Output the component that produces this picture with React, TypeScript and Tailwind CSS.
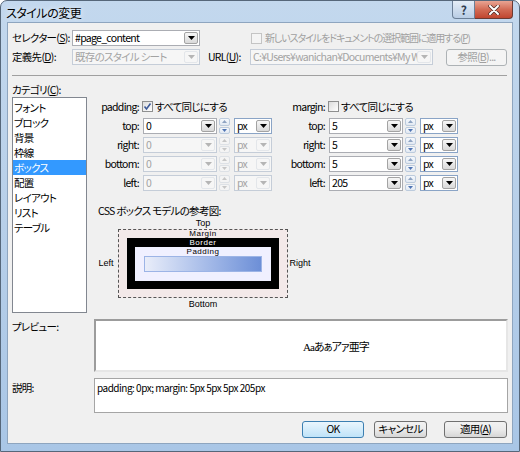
import React from 'react'

const ui = "font-['Noto_Sans_CJK_JP',sans-serif] [font-feature-settings:'palt']"

const Arrow: React.FC<{ off?: boolean }> = ({ off }) => (
  <svg width="7" height="4" viewBox="0 0 7 4">
    <path d="M0 0h7L3.5 4z" fill={off ? '#b5b5b5' : '#000'} />
  </svg>
)

const DropBtn: React.FC<{ off?: boolean }> = ({ off }) => (
  <div
    className={`w-[14px] h-[12px] mr-px shrink-0 flex items-center justify-center rounded-[2px] border ${
      off ? 'border-[#e3e6ea] bg-[#f6f6f6]' : 'border-[#a3a3a3] bg-gradient-to-b from-[#f7f7f7] to-[#d9d9d9]'
    }`}
  >
    <Arrow off={off} />
  </div>
)

const Combo: React.FC<{ w: string; value: string; off?: boolean; blue?: boolean }> = ({ w, value, off, blue }) => (
  <div
    className={`${w} h-[16px] shrink-0 flex items-center border ${
      off ? 'border-[#c5cdd8] bg-[#f6f6f6] text-[#a3a3a3]' : blue ? 'border-[#8aa4c6] bg-white' : 'border-[#abadb3] bg-white'
    }`}
  >
    <span className="flex-1 pl-[2px] overflow-hidden whitespace-nowrap leading-[14px]">{value}</span>
    <DropBtn off={off} />
  </div>
)

const Spin: React.FC<{ off?: boolean }> = ({ off }) => {
  const box = off ? 'border-[#dde1e6] bg-[#f4f4f4]' : 'border-[#bccbdd] bg-gradient-to-b from-[#f5f8fc] to-[#e2e9f2]'
  return (
    <div className="w-[11px] h-[16px] flex flex-col gap-px">
      <div className={`flex-1 flex items-center justify-center rounded-[2px] border ${box}`}>
        <svg width="5" height="3" viewBox="0 0 5 3">
          <path d="M0 3h5L2.5 0z" fill={off ? '#c6c6c6' : '#8ea3c2'} />
        </svg>
      </div>
      <div className={`flex-1 flex items-center justify-center rounded-[2px] border ${box}`}>
        <svg width="5" height="3" viewBox="0 0 5 3">
          <path d="M0 0h5L2.5 3z" fill={off ? '#c6c6c6' : '#4f74b3'} />
        </svg>
      </div>
    </div>
  )
}

const Check: React.FC<{ on?: boolean; off?: boolean }> = ({ on, off }) => (
  <div
    className={`w-[11px] h-[11px] shrink-0 border flex items-center justify-center ${
      off ? 'border-[#c4c4c4] bg-[#f4f4f4]' : 'border-[#8e8f8f] bg-gradient-to-br from-[#dcdcdc] to-white'
    }`}
  >
    {on && (
      <svg width="9" height="9" viewBox="0 0 9 9">
        <path d="M1.5 4.5l2 2.5 4-5.5" fill="none" stroke="#3d5a99" strokeWidth="1.6" />
      </svg>
    )}
  </div>
)

const Btn: React.FC<{ w: string; def?: boolean; off?: boolean; children: React.ReactNode }> = ({ w, def, off, children }) => (
  <div
    className={`${w} h-[17px] shrink-0 flex items-center justify-center rounded-[3px] border leading-none whitespace-nowrap ${
      def
        ? 'border-[#3c7fb1] bg-gradient-to-b from-[#eaf6fd] to-[#bfe3f8]'
        : off
        ? 'border-[#adb2b5] bg-[#f4f4f4] text-[#a0a0a0]'
        : 'border-[#707070] bg-gradient-to-b from-[#f2f2f2] via-[#ebebeb] to-[#d6d6d6]'
    }`}
  >
    {children}
  </div>
)

const rows = ['top', 'right', 'bottom', 'left']

const BoxColumn: React.FC<{ label: string; on: boolean; values: string[]; offRows: boolean; w: string }> = ({
  label,
  on,
  values,
  offRows,
  w,
}) => (
  <div className={`${w} flex flex-col`}>
    <div className="mt-[3px] h-[13px] flex items-center">
      <span className="w-[45px] text-right leading-[13px]">{label}:</span>
      <div className="ml-[3px]">
        <Check on={on} />
      </div>
      <span className="ml-[2px] leading-[13px] whitespace-nowrap">すべて同じにする</span>
    </div>
    <div className="mt-[5px] flex flex-col gap-[3px]">
      {rows.map((r, i) => {
        const off = offRows && i > 0
        return (
          <div key={r} className="h-[16px] flex items-center">
            <span className="w-[45px] text-right leading-[16px]">{r}:</span>
            <div className="ml-[4px]">
              <Combo w="w-[74px]" value={values[i]} off={off} />
            </div>
            <div className="ml-[2px]">
              <Spin off={off} />
            </div>
            <div className="ml-[4px]">
              <Combo w="w-[38px]" value="px" off={off} blue />
            </div>
          </div>
        )
      })}
    </div>
  </div>
)

const categories = ['フォント', 'ブロック', '背景', '枠線', 'ボックス', '配置', 'レイアウト', 'リスト', 'テーブル']

export default function App() {
  return (
    <div
      className={`${ui} w-[520px] h-[452px] flex flex-col text-[10.5px] tracking-[-0.7px] text-black border border-[#56677a] rounded-t-[7px] bg-gradient-to-b from-[#c3d8ee] via-[#b7cfe9] to-[#a9c6e6]`}
    >
      {/* Title bar */}
      <div className="h-[21px] flex items-start justify-between pl-[5px] pr-[6px]">
        <span className="text-[12px] tracking-[-0.5px] leading-[24px] [text-shadow:0_0_6px_white]">スタイルの変更</span>
        <div className="flex">
          <div className="w-[23px] h-[18px] flex items-center justify-center rounded-bl-[4px] border border-t-0 border-[#6b7f97] bg-gradient-to-b from-[#e4edf7] to-[#b9cde5] text-[12px] text-[#2f3d4f] font-bold leading-none">
            ?
          </div>
          <div className="w-[38px] h-[18px] flex items-center justify-center rounded-br-[4px] border border-t-0 border-l-0 border-[#6a3a33] bg-gradient-to-b from-[#e8a493] via-[#d26b55] to-[#c0452f]">
            <svg width="12" height="10" viewBox="0 0 12 10">
              <path d="M2 1l8 8M10 1L2 9" stroke="#4a2a26" strokeWidth="3.4" strokeLinecap="round" />
              <path d="M2 1l8 8M10 1L2 9" stroke="#fff" strokeWidth="2" strokeLinecap="round" />
            </svg>
          </div>
        </div>
      </div>

      {/* Client */}
      <div className="flex-1 px-[6px] pb-[7px]">
        <div className="h-full border border-[#8ea5bf] bg-[#f0f0f0] px-[4px] pt-[7px] flex flex-col">
          <div className="h-[16px] flex items-center">
            <span className="w-[60px] shrink-0 leading-[16px] whitespace-nowrap">
              セレクター(<u>S</u>):
            </span>
            <Combo w="w-[128px]" value="#page_content" />
            <div className="ml-[51px] shrink-0">
              <Check off />
            </div>
            <span className="ml-[3px] text-[10px] tracking-[-1.1px] text-[#a0a0a0] leading-[16px] whitespace-nowrap">
              新しいスタイルをドキュメントの選択範囲に適用する(<u>P</u>)
            </span>
          </div>

          <div className="mt-[3px] h-[16px] flex items-center">
            <span className="w-[60px] shrink-0 leading-[16px] whitespace-nowrap">
              定義先(<u>D</u>):
            </span>
            <Combo w="w-[128px]" value="既存のスタイル シート" off />
            <span className="ml-[8px] w-[42px] shrink-0 leading-[16px] whitespace-nowrap">
              URL(<u>U</u>):
            </span>
            <Combo w="w-[183px]" value="C:¥Users¥wanichan¥Documents¥My Web" off />
            <div className="ml-[13px]">
              <Btn w="w-[61px]" off>
                参照(<u>B</u>)...
              </Btn>
            </div>
          </div>

          <div className="mt-[10px] h-px mr-px bg-[#a0a0a0]" />

          <div className="mt-[7px] h-[14px] leading-[14px]">
            カテゴリ(<u>C</u>):
          </div>

          <div className="flex">
            <div className="w-[75px] h-[216px] border border-[#828790] bg-white pt-[2px]">
              {categories.map((c, i) => (
                <div
                  key={c}
                  className={`h-[15px] leading-[15px] pl-[1px] ${i === 4 ? 'bg-[#3399ff] text-white' : ''}`}
                >
                  {c}
                </div>
              ))}
            </div>

            <div className="ml-[7px] flex flex-col">
              <div className="flex">
                <BoxColumn w="w-[186px]" label="padding" on values={['0', '0', '0', '0']} offRows />
                <BoxColumn w="w-[190px]" label="margin" on={false} values={['5', '5', '5', '205']} offRows={false} />
              </div>

              <div className="mt-[13px] pl-[4px] h-[14px] leading-[14px]">CSS ボックス モデルの参考図:</div>

              <div className="w-[218px] flex flex-col font-['Liberation_Sans',sans-serif] text-[9px] tracking-normal">
                <div className="h-[11px] leading-[11px] text-center">Top</div>
                <div className="flex items-center">
                  <div className="w-[24px] text-center">Left</div>
                  <div className="w-[170px] border border-dashed border-[#555] bg-[#f3e9e9] px-[8px] pb-[8px] flex flex-col">
                    <div className="h-[8px] leading-[8px] text-[8px] text-center tracking-[0.5px]">Margin</div>
                    <div className="bg-black px-[8px] pb-[8px] flex flex-col">
                      <div className="h-[9px] leading-[9px] text-[8px] text-center text-white tracking-[0.5px]">Border</div>
                      <div className="bg-[#f0f0ff] px-[9px] pb-[9px] flex flex-col">
                        <div className="h-[9px] leading-[9px] text-[8px] text-center tracking-[0.5px]">Padding</div>
                        <div className="h-[16px] border border-[#9cb4e6] bg-gradient-to-r from-[#e9edf9] to-[#6d8fd7]" />
                      </div>
                    </div>
                  </div>
                  <div className="w-[24px] text-center">Right</div>
                </div>
                <div className="h-[12px] leading-[12px] text-center">Bottom</div>
              </div>
            </div>
          </div>

          <div className="mt-[6px] flex">
            <div className="w-[82px] leading-[14px] pt-[1px]">プレビュー:</div>
            <div className="flex-1 h-[53px] border-2 border-t-[#9c9c9c] border-l-[#9c9c9c] border-b-[#e6e6e6] border-r-[#e6e6e6] bg-white flex items-center pl-[207px] pt-[3px]">
              <span className="text-[11px] tracking-[-1px] font-['Liberation_Serif','Noto_Sans_CJK_JP',serif]">
                Aaあぁアァ亜字
              </span>
            </div>
          </div>

          <div className="mt-[6px] flex">
            <div className="w-[82px] leading-[14px] pt-[3px]">説明:</div>
            <div className="flex-1 h-[35px] border border-[#a5a5a5] bg-white pl-[2px] pt-[2px] text-[10px] tracking-[-0.5px] leading-[13px]">
              padding: 0px; margin: 5px 5px 5px 205px
            </div>
          </div>

          <div className="mt-[8px] flex justify-end pr-px">
            <Btn w="w-[62px]" def>
              OK
            </Btn>
            <div className="ml-[10px]">
              <Btn w="w-[53px]">キャンセル</Btn>
            </div>
            <div className="ml-[17px]">
              <Btn w="w-[63px]">
                適用(<u>A</u>)
              </Btn>
            </div>
          </div>
        </div>
      </div>
    </div>
  )
}
